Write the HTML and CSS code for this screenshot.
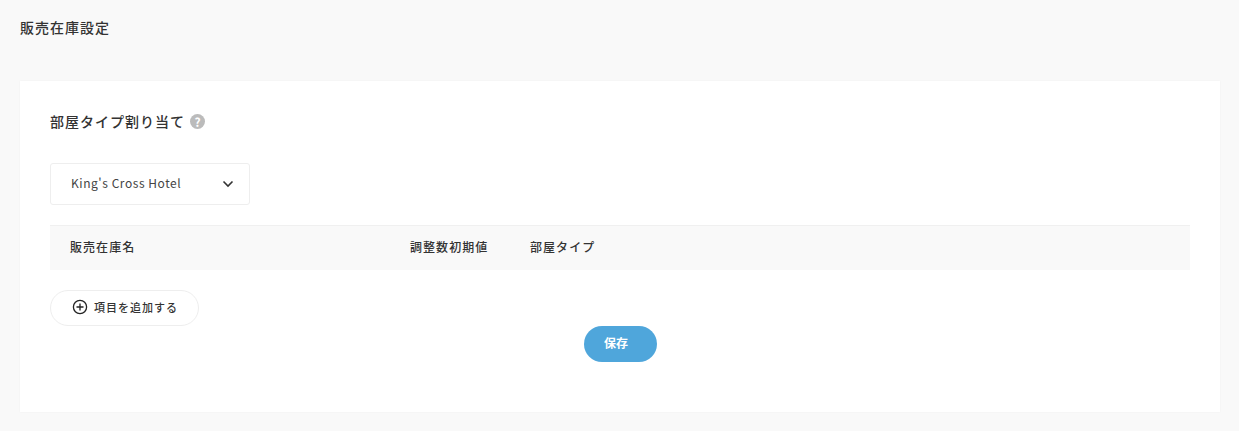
FILE: index.html
```html
<!DOCTYPE html>
<html lang="ja">
<head>
    <meta charset="UTF-8">
    <meta name="viewport" content="width=device-width, initial-scale=1.0">
    <title>販売在庫設定</title>
    <link rel="stylesheet" href="styles.css">
</head>
<body>
    <div class="page">
        <h1 class="page-title">販売在庫設定</h1>

        <div class="card">
            <div class="section-title">
                <h2>部屋タイプ割り当て</h2>
                <span class="help-icon">?</span>
            </div>

            <div class="hotel-select">
                <span>King's Cross Hotel</span>
                <svg class="chevron" width="12" height="8" viewBox="0 0 12 8">
                    <path d="M1.5 1.5 L6 6 L10.5 1.5" fill="none" stroke="#333" stroke-width="1.6"/>
                </svg>
            </div>

            <div class="table-head">
                <div class="col-name">販売在庫名</div>
                <div class="col-count">調整数初期値</div>
                <div class="col-type">部屋タイプ</div>
            </div>

            <button class="add-button">
                <svg width="16" height="16" viewBox="0 0 16 16">
                    <circle cx="8" cy="8" r="6.6" fill="none" stroke="#222" stroke-width="1.3"/>
                    <path d="M4.5 8 H11.5 M8 4.5 V11.5" fill="none" stroke="#222" stroke-width="1.3"/>
                </svg>
                <span>項目を追加する</span>
            </button>

            <div class="actions">
                <button class="save-button">保存</button>
            </div>
        </div>
    </div>
</body>
</html>
```

FILE: styles.css
```css
* {
    box-sizing: border-box;
}

body {
    margin: 0;
    background: #f9f9f9;
    color: #333;
    font-family: "Noto Sans CJK JP", "Noto Sans", sans-serif;
    overflow: hidden;
}

.page {
    height: 431px;
    padding: 0 19px 0 20px;
}

.page-title {
    margin: 0;
    padding-top: 17px;
    height: 81px;
    font-size: 14px;
    line-height: 21px;
    font-weight: 500;
    letter-spacing: 1px;
}

.card {
    height: 331px;
    background: #fff;
    padding: 30px 30px 0;
    box-shadow: 0 0 2px rgba(0, 0, 0, 0.04);
}

.section-title {
    display: flex;
    align-items: center;
    height: 21px;
    gap: 5px;
}

.section-title h2 {
    margin: 0;
    font-size: 14px;
    line-height: 21px;
    font-weight: 500;
    letter-spacing: 1px;
}

.help-icon {
    width: 15px;
    height: 15px;
    border-radius: 50%;
    background: #bbb;
    color: #fff;
    font-size: 12px;
    line-height: 15px;
    font-weight: 700;
    text-align: center;
}

.hotel-select {
    display: flex;
    justify-content: space-between;
    align-items: center;
    width: 200px;
    height: 42px;
    margin-top: 31px;
    padding: 0 15px 3px 20px;
    background: #fff;
    border: 1px solid #eee;
    border-radius: 3px;
    font-size: 12px;
    letter-spacing: 0.55px;
    color: #444;
}

.chevron {
    margin-top: 3px;
}

.table-head {
    display: flex;
    align-items: center;
    height: 45px;
    margin-top: 20px;
    padding-bottom: 3px;
    background: #f9f9f9;
    border-top: 1px solid #f0f0f0;
    font-size: 12px;
    font-weight: 500;
    letter-spacing: 1.05px;
}

.col-name {
    width: 360px;
    padding-left: 20px;
}

.col-count {
    width: 120px;
}

.add-button {
    display: flex;
    align-items: center;
    gap: 6px;
    width: 149px;
    height: 36px;
    margin-top: 20px;
    padding: 0 0 2px 21px;
    background: #fff;
    border: 1px solid #eee;
    border-radius: 18px;
    font-family: inherit;
    font-size: 11px;
    font-weight: 500;
    letter-spacing: 1px;
    color: #333;
}

.actions {
    display: flex;
    justify-content: center;
}

.save-button {
    width: 73px;
    height: 36px;
    padding: 0 8px 3px 0;
    background: #4fa6db;
    border: none;
    border-radius: 18px;
    color: #fff;
    font-family: inherit;
    font-size: 12px;
    font-weight: 700;
}
```
